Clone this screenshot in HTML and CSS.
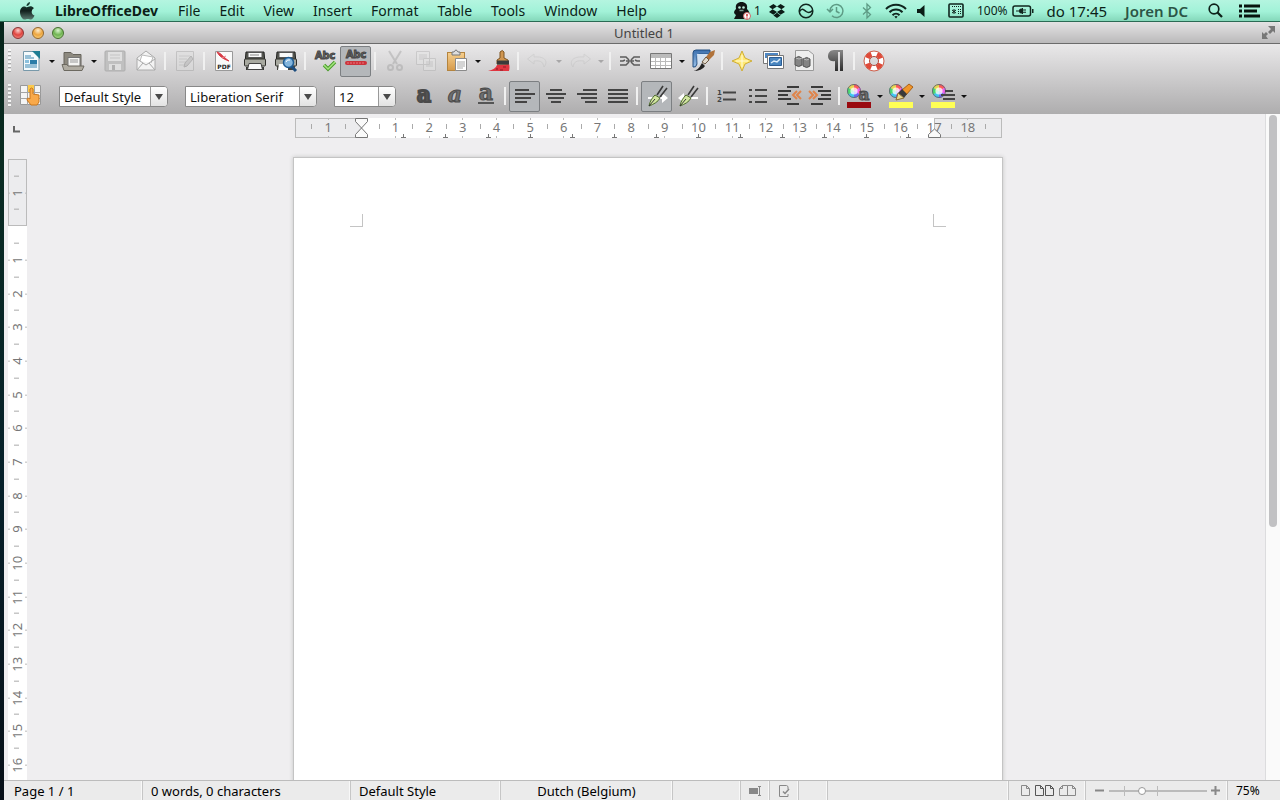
FILE: index.html
```
<!DOCTYPE html>
<html lang="en">
<head>
<meta charset="utf-8">
<title>Untitled 1</title>
<link rel="stylesheet" href="styles.css">
</head>
<body>
<svg class="defs" aria-hidden="true">
  <defs>
    <linearGradient id="ink" x1="0" y1="0" x2="0" y2="1"><stop offset="0" stop-color="#888"/><stop offset="1" stop-color="#2c2c2c"/></linearGradient>
    <linearGradient id="gold" x1="0" y1="0" x2="0" y2="1"><stop offset="0" stop-color="#f6cf8e"/><stop offset="1" stop-color="#d69a4a"/></linearGradient>
    <linearGradient id="blue" x1="0" y1="0" x2="0" y2="1"><stop offset="0" stop-color="#3a6fae"/><stop offset="1" stop-color="#9cc3ea"/></linearGradient>
    <symbol id="wheel" viewBox="0 0 14 14">
      <path fill="#ff5a5a" d="M7 7 7 0A7 7 0 0 1 13 3.500z"/><path fill="#f060f0" d="M7 7 13 3.500A7 7 0 0 1 13 10.500z"/>
      <path fill="#6a6af8" d="M7 7 13 10.500A7 7 0 0 1 7 14z"/><path fill="#40c8f0" d="M7 7 7 14A7 7 0 0 1 1 10.500z"/>
      <path fill="#48dc70" d="M7 7 1 10.500A7 7 0 0 1 1 3.500z"/><path fill="#e8d850" d="M7 7 1 3.500A7 7 0 0 1 7 0z"/>
      <circle cx="7" cy="7" r="3.600" fill="#fff" opacity=".75"/><circle cx="7" cy="7" r="6.500" fill="none" stroke="#667"/>
    </symbol>
    <symbol id="nib" viewBox="0 0 24 24">
      <path d="M12 11 18 2M15 13 22 4" stroke="#3a3a3a" stroke-width="1.600" fill="none"/>
      <path d="M4 22C5 17 7 14 10 11L15 14C13 18 9 20 4 22z" fill="#d2e6a0" stroke="#4c6a2c"/>
      <path d="M4 22 10 15" stroke="#333" fill="none"/>
    </symbol>
  </defs>
</svg>

<header class="menubar">
  <nav class="menus" aria-label="Application menu">
    <button class="apple" aria-label="Apple"><svg width="16" height="18" viewBox="0 0 16 18"><defs><linearGradient id="ap" x1="0" y1="0" x2="0" y2="1"><stop offset="0" stop-color="#1b4a3c"/><stop offset=".5" stop-color="#12201c"/><stop offset="1" stop-color="#5a7a70"/></linearGradient></defs><path fill="url(#ap)" d="M11 0c.2 2-1.500 4-3.500 4C7.300 2.200 9 .4 11 0zM7.900 5.300C8.700 5.300 9.700 4.300 11.400 4.300c1 0 2.600.5 3.500 1.900-3.300 2-2.700 6.200.6 7.400-.8 2.200-2.200 4-3.600 4-1.200 0-1.700-.7-3.100-.7s-2 .7-3.100.7C3.500 17.600 1 13.800 1 10.200 1 6.500 3.300 4.500 5.300 4.500c1.300 0 2 .8 2.600.8z"/></svg></button>
    <button class="app">LibreOfficeDev</button><button>File</button><button>Edit</button><button>View</button><button>Insert</button><button>Format</button><button>Table</button><button>Tools</button><button>Window</button><button>Help</button>
  </nav>
  <div class="tray">
    <span class="count"><svg width="19" height="19" viewBox="0 0 19 19"><path fill="#101514" d="M3 8C2 3 5 1 8.500 1S15 3 14 8c2 2 3 4 2 6l1 4H1l2-4C0 12 1 10 3 8z"/><circle cx="6.500" cy="6.500" r="1.300" fill="#b9e9d6"/><circle cx="10.500" cy="6.500" r="1.300" fill="#b9e9d6"/><path d="M6.500 9.500h4" stroke="#7a9a8e" stroke-width="1.500"/><circle cx="14" cy="15" r="3.500" fill="#fff" stroke="#c66"/><path d="M14 13v2.500M14 16.500v1" stroke="#c22" stroke-width="1.400"/></svg>1</span>
    <svg width="16" height="16" viewBox="0 0 18 18" fill="#0c1c17"><path d="M5 1 0 4.200 4 7 9 4zM13 1 18 4.200 14 7 9 4zM0 10 5 13.200 9 10 4 7zM18 10 13 13.200 9 10 14 7zM9 11 13 14 9 17 5 14z"/></svg>
    <svg width="16" height="16" viewBox="0 0 16 16" fill="none" stroke="#11271f" stroke-width="1.500"><circle cx="8" cy="8" r="6.800"/><path d="M1.500 8.500C4 4.500 6 7 8 8.500S12 10 14.500 7.500"/></svg>
    <svg class="history" width="18" height="16" viewBox="0 0 18 16" fill="none" stroke="#5e9b85" stroke-width="1.500"><path d="M3 8a6.500 6.500 0 1 1 2 4.700M0 6l3 3 3-3M9.500 4v4.500l3 1.500"/></svg>
    <svg width="10" height="16" viewBox="0 0 10 16" fill="none" stroke="#5e9b85" stroke-width="1.300"><path d="M1 4.500 8.500 11.500 5 15V1L8.500 4.500 1 11.500"/></svg>
    <svg width="22" height="16" viewBox="0 0 22 16" fill="none" stroke="#10251e" stroke-width="2"><path d="M1 6a14 14 0 0 1 20 0M4.500 9.200a9 9 0 0 1 13 0M7.500 12.200a5 5 0 0 1 7 0"/><path d="M9.300 13.500 11 15.500 12.700 13.500Q11 12.300 9.300 13.500z" fill="#10251e" stroke="none"/></svg>
    <svg class="speaker" width="8" height="12" viewBox="0 0 8 12" fill="#0b1c16"><path d="M0 4h3L7.500 0v12L3 8H0z"/></svg>
    <svg width="16" height="15" viewBox="0 0 16 15" fill="none" stroke="#10251e"><rect x="1" y="1" width="14" height="13" rx="1" stroke-width="1.600"/><path d="M6 6v5M4 7l4 3M8 7l-4 3"/><path stroke-dasharray="1 1" d="M4 3.500h9M10 6.500h3M10 8.500h3M10 10.500h3"/></svg>
    <span class="power">100%<svg width="22" height="12" viewBox="0 0 22 12"><rect x="1" y="1" width="17.500" height="10" rx="2" fill="none" stroke="#12271f" stroke-width="1.500"/><path fill="#12271f" d="M20 4h1.500v4H20zM4 5.500h3C7 4 8.500 3.500 10 3.500V3h1v1.500h3v1h-3v1.200h3v1h-3V9h-1V8.500C8.500 8.500 7 8 7 6.500H4z"/></svg></span>
    <span class="clock">do 17:45</span>
    <strong class="user">Joren DC</strong>
    <svg class="search" width="15" height="15" viewBox="0 0 15 15" fill="none" stroke="#0e2119"><circle cx="6" cy="6" r="4.800" stroke-width="1.700"/><path d="M9.500 9.500 14 14" stroke-width="2.300"/></svg>
    <svg width="21" height="14" viewBox="0 0 21 14" fill="none" stroke="#07140f" stroke-width="3"><path d="M0 2h3M5 2h16M0 7h3M5 7h13M0 12h3M5 12h16"/></svg>
  </div>
</header>

<main class="window">
  <div class="titlebar">
    <div class="lights"><button class="light red" aria-label="Close"></button><button class="light amber" aria-label="Minimise"></button><button class="light green" aria-label="Zoom"></button></div>
    <h1>Untitled 1</h1>
    <button class="full" aria-label="Full screen"><svg width="15" height="15" viewBox="0 0 15 15" fill="#777"><path d="M7 1h7v7l-2-2-3 3-2-2 3-3zM1 7l2 2 2-2 2 2-2 2 2 3H1z"/></svg></button>
  </div>

  <div class="toolbars">
    <div class="toolbar" role="toolbar" aria-label="Standard">
      <i class="grip"></i>
      <button class="tool" aria-label="New"><svg viewBox="0 0 24 24"><path d="M4.500 2.500H16l4 4V21.500H4.500z" fill="#f4fafc" stroke="#7899aa"/><path d="M13 2h8v8z" fill="#1d7d93"/><path d="M6 7h6M6 9h9M6 16h12M6 18h12" stroke="#3b87b2"/><path d="M6 11h4v3H6z" fill="#8bc0dd"/><path d="M11 11h7v4h-7z" fill="#2c7da8"/></svg></button>
      <button class="drop" aria-label="New options"></button>
      <button class="tool" aria-label="Open"><svg viewBox="0 0 24 24"><path d="M3 17V3.500h7l2 2h8V17" fill="#8d897f" stroke="#66635b"/><path d="M7 8.500h12V18H7z" fill="#f4f4f2" stroke="#777"/><path d="M9 11h8M9 13h8" stroke="#999"/><path d="M1 15.500h5l1 1.500h16l-2 4.500H3z" fill="#b0aca2" stroke="#6c6960"/></svg></button>
      <button class="drop" aria-label="Open options"></button>
      <button class="tool" aria-label="Save" disabled><svg viewBox="0 0 24 24"><rect x="2" y="2" width="20" height="20" rx="1" fill="#c0c0c0" stroke="#adadad"/><path d="M5 3h14v9H5z" fill="#e0e0e0"/><path d="M7 6h10M7 9h10" stroke="#c4c4c4"/><path d="M6 15h12v6H6z" fill="#dedede"/><path d="M9 16h3v5H9z" fill="#b0b0b0"/></svg></button>
      <button class="tool" aria-label="E-mail"><svg viewBox="0 0 24 24"><path d="M3 9 12 2l9 7v12H3z" fill="#f3f3f3" stroke="#aaa"/><path d="M6 12 8 6l11 2-2 6" fill="#fff" stroke="#bbb"/><path d="M3 10 12 16 21 10M3 21 9 14M21 21 15 14" stroke="#aaa" fill="none"/></svg></button>
      <i class="sep"></i>
      <button class="tool faint" aria-label="Edit file" disabled><svg viewBox="0 0 24 24"><path d="M3.500 2.500h17v19h-17z" fill="#ddd" stroke="#999"/><path d="M6 7h11M6 10h8M6 13h7M6 16h6" stroke="#aaa"/><path d="M11 18l1-4 6-7 2 3-6 7z" fill="#aaa" stroke="#777"/></svg></button>
      <i class="sep"></i>
      <button class="tool" aria-label="Export as PDF"><svg viewBox="0 0 24 24"><path d="M3.500 2.500h17v19h-17z" fill="#fafafa" stroke="#999"/><path d="M5 3C9 4 11 8 17 12C11 10 7 7 5 3z" fill="#d83a45" stroke="#d83a45"/><path d="M10 9 14 7" stroke="#e88a90"/><text x="12" y="20" text-anchor="middle" class="pdf">PDF</text></svg></button>
      <button class="tool" aria-label="Print"><svg viewBox="0 0 24 24"><path d="M3 3h18l1 11H2z" fill="#55564f" stroke="#222"/><path d="M5 3.500h14v5H5z" fill="#fafafa" stroke="#555"/><path d="M7 6h9" stroke="#888"/><rect x="1.500" y="10" width="21" height="7" rx="1" fill="#a8a9a0" stroke="#30302c"/><path d="M3 18h5v-4h10v4h3v3H3z" fill="#383935"/><path d="M6 14.500h12l1.500 6h-15z" fill="#fafafa" stroke="#444"/></svg></button>
      <button class="tool" aria-label="Print preview"><svg viewBox="0 0 24 24"><path d="M3 3h18l1 11H2z" fill="#55564f" stroke="#222"/><path d="M5 3.500h14v5H5z" fill="#fafafa" stroke="#555"/><rect x="1.500" y="10" width="21" height="7" rx="1" fill="#a8a9a0" stroke="#30302c"/><path d="M3 17h18v4H3z" fill="#43433f"/><path d="M5 15h9v6H4z" fill="#fff"/><path d="M17 17l5 5" stroke="#1d4d7e" stroke-width="3"/><circle cx="14.500" cy="13.500" r="5" fill="#82b4dc" stroke="#1e5c94" stroke-width="1.500"/><path d="M12 13q1-3 4-2" stroke="#fff" fill="none"/></svg></button>
      <i class="sep"></i>
      <button class="tool" aria-label="Spelling"><svg viewBox="0 0 24 24"><text x="12" y="10" text-anchor="middle" class="abc">Abc</text><path d="M11 16l4 4 7-7" fill="none" stroke="#4a9c2a" stroke-width="3.500"/><path d="M11 16l4 4 7-7" fill="none" stroke="#a5e580" stroke-width="1.500"/></svg></button>
      <button class="tool on" aria-label="AutoSpellcheck" aria-pressed="true"><svg viewBox="0 0 24 24"><text x="12" y="9" text-anchor="middle" class="abc">Abc</text><path d="M3 14h18" fill="none" stroke="#cc333b" stroke-width="4" stroke-linecap="round"/><path d="M3 14h18" stroke="#e8777c" stroke-dasharray="2 1"/></svg></button>
      <i class="sep"></i>
      <button class="tool faint" aria-label="Cut" disabled><svg viewBox="0 0 24 24" fill="none" stroke="#999" stroke-width="2"><path d="M6 2l8 13M18 2 10 15"/><circle cx="7.500" cy="18.500" r="2.500"/><circle cx="16.500" cy="18.500" r="2.500"/></svg></button>
      <button class="tool faint" aria-label="Copy" disabled><svg viewBox="0 0 24 24" fill="#e8e8e8" stroke="#aaa"><path d="M2.500 2.500h13v13h-13zM9.500 9.500h12v12h-12z"/><path d="M5 6h8M5 8h8M5 10h4M12 13h7M12 15h7M12 17h7"/></svg></button>
      <button class="tool" aria-label="Paste"><svg viewBox="0 0 24 24"><rect x="2.500" y="3.500" width="17" height="18" fill="url(#gold)" stroke="#b4843e"/><path d="M7 5V3h2q2-4 4 0h2v3H7z" fill="#ddd" stroke="#777"/><path d="M10.500 9.500h11v12h-11z" fill="#fff" stroke="#8a8a8a"/><path d="M12 13h8M12 15h8M12 17h8M12 19h6" stroke="#aaa"/></svg></button>
      <button class="drop" aria-label="Paste options"></button>
      <button class="tool" aria-label="Clone formatting"><svg viewBox="0 0 24 24"><path d="M1 22C6 21 9 19 10 16l12-1q1 3 0 7z" fill="#e03540"/><path d="M9 20h2M13 21h3M16 18h3" stroke="#8b1a24"/><path d="M10 11 13 9V3q2.500-3 4 0V9L21 11v4H10z" fill="#cf9550" stroke="#7d5522"/><path d="M10 11.500h12v4H10z" fill="#3a3a3a"/></svg></button>
      <i class="sep"></i>
      <button class="tool pale" aria-label="Undo" disabled><svg viewBox="0 0 24 24"><path d="M8 5 1.500 10 8 15V12c8-1 9 2 10 6 4-5 2-11-10-10z" fill="#ddd" stroke="#aaa"/></svg></button>
      <button class="drop pale" aria-label="Undo history" disabled></button>
      <button class="tool pale" aria-label="Redo" disabled><svg viewBox="0 0 24 24"><path d="M16 5l6.500 5-6.500 5V12c-8-1-10 1-11 6-4-5-1-11 11-10z" fill="#ddd" stroke="#aaa"/></svg></button>
      <button class="drop pale" aria-label="Redo history" disabled></button>
      <i class="sep"></i>
      <button class="tool" aria-label="Hyperlink"><svg viewBox="0 0 24 24" fill="none" stroke="#5c5c5c" stroke-width="1.500"><path d="M2 8h6l3 3M2 16h6l3-3M22 8h-6l-3 3M22 16h-6l-3-3M8 12h8M2 12h3l2-1M22 12h-3l-2-1"/></svg></button>
      <button class="tool" aria-label="Table"><svg viewBox="0 0 24 24"><path d="M1.500 4.500h21v15h-21z" fill="#fff" stroke="#777"/><path d="M2 5h20v3H2z" fill="#bbb"/><path d="M2 8.500h20M2 12.500h20M2 16.500h20M6.500 8v11M11.500 8v11M16.500 8v11" stroke="#bbb"/></svg></button>
      <button class="drop" aria-label="Table options"></button>
      <button class="tool" aria-label="Show draw functions"><svg viewBox="0 0 24 24"><path d="M2 4q0-3 3-3h14v4H8q-2 0-2 3v7q-1 4-4 3z" fill="url(#blue)" stroke="#234e80"/><path d="M6 5h11L7 17z" fill="#d3e2f2"/><path d="M2 22q5 0 9-8l3 3q-3 5-12 5z" fill="#222"/><path d="M24 1 19 3l-4 5 3 3 5-5z" fill="#b0723a"/><path d="M15 8l3 3-4 4-3-2z" fill="#e0d9cc" stroke="#6d5a44"/></svg></button>
      <i class="sep"></i>
      <button class="tool" aria-label="Navigator"><svg viewBox="0 0 24 24"><path d="M12 2l3 7 7 3-7 3-3 7-3-7-7-3 7-3z" fill="#ffe873" stroke="#cfae38"/><path d="M12 6v12M6 12h12" stroke="#fffbe0"/></svg></button>
      <button class="tool" aria-label="Gallery"><svg viewBox="0 0 24 24"><path d="M2.500 2.500h16v12h-16z" fill="#fff" stroke="#777"/><path d="M4 4h13v5H4z" fill="#4e86c2"/><path d="M6.500 6.500h16v13h-16z" fill="#fff" stroke="#777"/><path d="M8.500 8.500h12v8h-12z" fill="#4a86c0" stroke="#2a5c94"/><path d="M10 14l3-2 3 1 3-3" stroke="#e0edf8" stroke-width="1.500" fill="none"/></svg></button>
      <button class="tool" aria-label="Data sources"><svg viewBox="0 0 24 24"><path d="M3.500 1.500h13l5 4v16h-18z" fill="#eee" stroke="#999"/><path d="M3 9q4-3 7 0v7q-3 3-7 0zM11 10q4-3 7 0v7q-3 3-7 0z" fill="#848484" stroke="#555"/><path d="M4 9q3 2 6 0M12 10q3 2 5 0" stroke="#bbb" fill="none"/></svg></button>
      <button class="tool" aria-label="Nonprinting characters"><svg viewBox="0 0 24 24"><path d="M11 1h9v21h-3V3h-2v19h-3V12C7 13 5 10 5 7s2-6 6-6z" fill="url(#ink)"/></svg></button>
      <i class="sep"></i>
      <button class="tool" aria-label="Help"><svg viewBox="0 0 24 24" fill="none"><circle cx="12" cy="12" r="7.300" stroke="#fff" stroke-width="5"/><circle cx="12" cy="12" r="7.300" stroke="#e04a3a" stroke-width="5" stroke-dasharray="5.700 5.760" stroke-dashoffset="-2.900"/><circle cx="12" cy="12" r="10" stroke="#d0604c"/><circle cx="12" cy="12" r="4.500" stroke="#b04a3c"/></svg></button>
    </div>

    <div class="toolbar" role="toolbar" aria-label="Formatting">
      <i class="grip"></i>
      <button class="tool" aria-label="Styles and formatting"><svg viewBox="0 0 24 24"><path d="M1.500 1.500h20v19h-20z" fill="#f4f4f4" stroke="#999"/><path d="M8 1h7v7H8z" fill="#fbc94a"/><path d="M1.500 8.500h20M1.500 14.500h20M8.500 1v20M15.500 1v20" stroke="#a4a4a4"/><path d="M11 12V5q1.500-2 3 0v5l6 1v7l-2 3h-6L8 16q0-3 3-1z" fill="#f9a94a" stroke="#c9761c"/></svg></button>
      <label class="combo style"><select aria-label="Paragraph style"><option>Default Style</option></select><i></i></label>
      <label class="combo font"><select aria-label="Font name"><option>Liberation Serif</option></select><i></i></label>
      <label class="combo size"><select aria-label="Font size"><option>12</option></select><i></i></label>
      <button class="tool" aria-label="Bold"><svg viewBox="0 0 24 24"><text x="12" y="18" text-anchor="middle" class="letter heavy">a</text></svg></button>
      <button class="tool" aria-label="Italic"><svg viewBox="0 0 24 24"><text x="12" y="18" text-anchor="middle" class="letter slant">a</text></svg></button>
      <button class="tool" aria-label="Underline"><svg viewBox="0 0 24 24"><text x="12" y="16" text-anchor="middle" class="letter">a</text><path d="M4 19h16" stroke="#555" stroke-width="2"/></svg></button>
      <i class="sep"></i>
      <button class="tool on" aria-label="Align left" aria-pressed="true"><svg viewBox="0 0 24 24" stroke="#444" stroke-width="2"><path d="M2 6h14M2 10h20M2 14h16M2 18h12"/></svg></button>
      <button class="tool" aria-label="Centre"><svg viewBox="0 0 24 24" stroke="#444" stroke-width="2"><path d="M6 6h12M2 10h20M4 14h16M7 18h10"/></svg></button>
      <button class="tool" aria-label="Align right"><svg viewBox="0 0 24 24" stroke="#444" stroke-width="2"><path d="M8 6h14M2 10h20M6 14h16M10 18h12"/></svg></button>
      <button class="tool" aria-label="Justify"><svg viewBox="0 0 24 24" stroke="#444" stroke-width="2"><path d="M2 6h20M2 10h20M2 14h20M2 18h20"/></svg></button>
      <i class="sep"></i>
      <button class="tool on" aria-label="Left to right" aria-pressed="true"><svg viewBox="0 0 24 24"><path d="M3 13h14V9l6 5-6 5v-4H3z" fill="#fff"/><use href="#nib"/></svg></button>
      <button class="tool" aria-label="Right to left"><svg viewBox="0 0 24 24"><path d="M22 13H8V9l-6 5 6 5v-4h14z" fill="#fff"/><use href="#nib"/></svg></button>
      <i class="sep"></i>
      <button class="tool" aria-label="Numbering"><svg viewBox="0 0 24 24"><text x="2" y="11" class="digit">1</text><text x="2" y="18" class="digit">2</text><path d="M8 8.500h13M8 15.500h13" stroke="#444" stroke-width="2"/></svg></button>
      <button class="tool" aria-label="Bullets"><svg viewBox="0 0 24 24" stroke="#444" stroke-width="2"><path d="M3 6h3M3 12h3M3 18h3M9 6h12M9 12h12M9 18h12"/></svg></button>
      <button class="tool" aria-label="Decrease indent"><svg viewBox="0 0 24 24" fill="none" stroke="#3a3a3a" stroke-width="2"><path d="M10 3h12M1 7h13M1 11h10M1 15h13M10 20h12"/><path d="M20 7l-4 4 4 4M24 7l-4 4 4 4" stroke="#e0844a"/></svg></button>
      <button class="tool" aria-label="Increase indent"><svg viewBox="0 0 24 24" fill="none" stroke="#3a3a3a" stroke-width="2"><path d="M3 3h12M10 7h13M13 11h10M10 15h13M3 20h12"/><path d="M1 7l4 4-4 4M5 7l4 4-4 4" stroke="#e0844a"/></svg></button>
      <i class="sep"></i>
      <button class="tool" aria-label="Font colour"><svg viewBox="0 0 24 24"><use href="#wheel" x="0" y="0" width="14" height="14"/><text x="17" y="16" text-anchor="middle" class="letter small">a</text><path d="M0 18h24v6H0z" fill="#9a0a10"/></svg></button>
      <button class="drop" aria-label="Font colour options"></button>
      <button class="tool" aria-label="Highlighting"><svg viewBox="0 0 24 24"><use href="#wheel" x="0" y="0" width="14" height="14"/><path d="M24 3 20 0l-7 6 4 5z" fill="#f0952a" stroke="#a86018"/><path d="M13 5l5 5-3 4-6-5z" fill="#3a3a3a"/><path d="M7 16l2-7 6 5z" fill="#e8d890" stroke="#8a6a30"/><path d="M0 18h24v6H0z" fill="#ffff55"/></svg></button>
      <button class="drop" aria-label="Highlighting options"></button>
      <button class="tool" aria-label="Background colour"><svg viewBox="0 0 24 24"><use href="#wheel" x="1" y="0" width="14" height="14"/><path d="M14 7h8M10 11h14M12 15h12" stroke="#444" stroke-width="2"/><path d="M0 18h24v6H0z" fill="#ffff55"/></svg></button>
      <button class="drop" aria-label="Background colour options"></button>
    </div>
  </div>

  <div class="workspace">
    <div class="side">
      <button class="tabstop" aria-label="Tab type"><svg width="8" height="7" viewBox="0 0 8 7"><path d="M1 0v5.500h6" fill="none" stroke="#666" stroke-width="2"/></svg></button>
      <div class="vclip"><div class="vruler" id="vruler"></div></div>
    </div>
    <div class="desk">
      <div class="hruler" id="hruler"></div>
      <article class="page"><i class="corner left"></i><i class="corner right"></i></article>
    </div>
    <div class="scroll"><i></i></div>
  </div>

  <footer class="status">
    <span class="cell pages">Page 1 / 1</span>
    <span class="cell words">0 words, 0 characters</span>
    <span class="cell pstyle">Default Style</span>
    <span class="cell lang">Dutch (Belgium)</span>
    <span class="cell gap"></span>
    <button class="cell mini" aria-label="Insert mode"><svg width="14" height="12" viewBox="0 0 14 12"><path d="M1 3h9v6H1z" fill="#888"/><path d="M10 1.500h3M10 10.500h3M11.500 1v10" stroke="#888"/></svg></button>
    <button class="cell mini" aria-label="Selection mode"><svg width="12" height="12" viewBox="0 0 12 12" fill="none" stroke="#888"><path d="M10 4V1.500L8.500.500H1.500v11H10V9"/><path d="M5 6.500l2 2L11 4" stroke-width="1.500"/></svg></button>
    <span class="cell mini"></span>
    <span class="cell fill"></span>
    <span class="cell views">
      <button aria-label="Single page"><svg width="9" height="11" viewBox="0 0 9 11" fill="none" stroke="#888"><path d="M.5.500h5l3 3v7h-8zM5.500.500v3h3"/></svg></button>
      <button aria-label="Multiple pages"><svg width="19" height="11" viewBox="0 0 19 11" fill="none" stroke="#555"><path d="M.5.500h5l3 3v7h-8zM5.500.500v3h3M10.500.500h5l3 3v7h-8zM15.500.500v3h3"/></svg></button>
      <button aria-label="Book view"><svg width="17" height="11" viewBox="0 0 17 11" fill="none" stroke="#888"><path d="M8.500.500h5l3 3v7h-16v-7l3-3h5v10M13.500.500v3h3M3.500.500v3h-3"/></svg></button>
    </span>
    <span class="cell zoom">
      <button aria-label="Zoom out"><svg width="9" height="9" viewBox="0 0 9 9"><path d="M0 4.500h9" stroke="#888" stroke-width="2"/></svg></button>
      <input type="range" min="0" max="100" value="33" aria-label="Zoom">
      <button aria-label="Zoom in"><svg width="9" height="9" viewBox="0 0 9 9"><path d="M0 4.500h9M4.500 0v9" stroke="#888" stroke-width="2"/></svg></button>
    </span>
    <span class="cell percent">75%</span>
  </footer>
</main>
<script src="rulers.js"></script>
</body>
</html>
```
FILE: rulers.js
```
// Both rulers are grids counted in quarter centimetres, with a 2 cm page margin.
function place(ruler, axis, className, start, span, text) {
  const el = document.createElement('span');
  el.className = className;
  el.style[axis === 'h' ? 'gridColumn' : 'gridRow'] = (start + 1) + ' / span ' + span;
  if (text) el.textContent = text;
  ruler.append(el);
}

const h = document.getElementById('hruler');
place(h, 'h', 'margin', 0, 8);
place(h, 'h', 'body', 8, 68);
place(h, 'h', 'margin', 76, 8);
for (let cm = -1; cm <= 19; cm++) {
  if (cm === 19) place(h, 'h', 'mark', 82, 2);
  else place(h, 'h', cm ? 'mark num' : 'mark', (cm + 2) * 4 - 2, 4, cm ? String(Math.abs(cm)) : '');
}
for (let i = 1; i <= 13; i++) place(h, 'h', 'tab', 8 + i * 5 - 1, 2);
place(h, 'h', 'indent first', 6, 4);
place(h, 'h', 'indent last', 74, 4);
const shape = (d) => '<svg width="13" height="20" viewBox="0 0 13 20" fill="#fafafa" stroke="#777"><path d="' + d + '"/></svg>';
h.querySelector('.first').innerHTML = shape('M.5.500h12v3L6.500 10 .5 3.500zM.5 19.500h12v-3L6.500 10 .5 16.500z');
h.querySelector('.last').innerHTML = shape('M.5 19.500h12v-3L6.500 11 .5 16.500z');

const v = document.getElementById('vruler');
place(v, 'v', 'margin', 0, 8);
place(v, 'v', 'body', 8, 110);
for (let cm = -1; cm <= 16; cm++) {
  place(v, 'v', cm ? 'mark num' : 'mark', (cm + 2) * 4 - 2, 4, cm ? String(Math.abs(cm)) : '');
}
```
FILE: styles.css
```
* { box-sizing: border-box; }
html, body { height: 100%; margin: 0; }
body {
  display: flex;
  flex-direction: column;
  overflow: hidden;
  font-family: "Noto Sans", "Open Sans", sans-serif;
  font-size: 13px;
  color: #111;
  background: linear-gradient(#06231a, #0a2c22 20%, #06202a 60%, #081018);
}
button, select, input { font: inherit; color: inherit; margin: 0; }
button { display: flex; align-items: center; justify-content: center; padding: 0; border: 0; background: none; }
svg { display: block; flex: none; overflow: visible; }
.defs { position: absolute; width: 0; height: 0; overflow: hidden; }

/* Menu bar */
.menubar {
  display: flex;
  justify-content: space-between;
  flex: none;
  height: 22px;
  padding: 0 20px 0 19px;
  border-bottom: 1px solid #2c6b55;
  background: linear-gradient(#b4f5e0, #a2f2d8 55%, #84d8ba);
  font-size: 14px;
  color: #0c1f18;
}
.menus, .tray { display: flex; align-items: center; }
.menus { gap: 19px; }
.app { width: 105px; font-weight: 700; }
.tray { gap: 13px; }
.count, .power { display: flex; align-items: center; gap: 2px; font-size: 12px; }
.count { margin-right: -5px; }
.power { gap: 4px; }
.history { margin-right: 4px; }
.speaker { margin: 0 10px 0 -3px; }
.clock, .user { font-size: 15px; }
.user { padding: 0 7px 0 5px; font-weight: 600; color: #2c5546; }
.search { margin-right: 3px; }

/* Window frame */
.window { display: flex; flex-direction: column; flex: 1; min-height: 0; margin-left: 4px; background: #efeef0; }
.titlebar {
  display: grid;
  grid-template-columns: 1fr auto 1fr;
  align-items: center;
  flex: none;
  height: 22px;
  padding: 0 4px 0 8px;
  border-bottom: 1px solid #6b6b6b;
  border-radius: 4px 4px 0 0;
  background: linear-gradient(#e4e3e4, #bab9ba);
}
.titlebar h1 { margin: 0; font-size: 13px; font-weight: 400; color: #444; }
.lights { display: flex; gap: 8px; }
.light { width: 12px; height: 12px; border: 1px solid #555; border-radius: 50%; }
.red { border-color: #8a3434; background: radial-gradient(circle at 50% 25%, #fbd0cc, #e0443e 50%, #f49a94); }
.amber { border-color: #94662a; background: radial-gradient(circle at 50% 25%, #fdeccb, #eda53e 50%, #fbdc90); }
.green { border-color: #44702f; background: radial-gradient(circle at 50% 25%, #dcf5cf, #6fb452 50%, #bfe69c); }
.full { justify-self: end; }

/* Toolbars */
.toolbars { flex: none; background: linear-gradient(#e9e8e9, #aeadae); }
.toolbar { display: flex; align-items: center; height: 35px; padding: 0 0 1px 4px; }
.grip { width: 3px; height: 24px; margin-right: 4px; background: repeating-linear-gradient(#f6f6f6 0 2px, #aaa 2px 3px, transparent 3px 4px); }
.tool { flex: none; width: 31px; height: 31px; border: 1px solid transparent; border-radius: 2px; }
.tool svg { width: 24px; height: 24px; }
.tool.on { border-color: #7c7f82; background: #b4b7ba; }
.faint { opacity: .4; }
.pale { opacity: .25; }
.sep { flex: none; width: 2px; height: 18px; margin: 0 3px; border-left: 2px solid #f0f0f0; }
.drop { flex: none; width: 11px; height: 24px; }
.drop::after { content: ""; border: 3px solid transparent; border-top-color: #111; border-bottom: 0; }
.combo { display: flex; position: relative; height: 21px; margin-right: 17px; margin-top: 1px; border: 1px solid #888; border-radius: 0 4px 4px 0; background: #fff; overflow: hidden; }
.combo select { appearance: none; width: 100%; padding: 0 18px 0 4px; border: 0; background: none; font-size: 13px; }
.combo i { position: absolute; top: 0; right: 0; bottom: 0; display: flex; align-items: center; justify-content: center; width: 17px; border-left: 1px solid #999; background: linear-gradient(#fff, #e2e2e2); pointer-events: none; }
.combo i::after { content: ""; border: 4px solid transparent; border-top: 6px solid #4a4a4a; border-bottom: 0; }
.style { width: 109px; margin-left: 13px; }
.font { width: 132px; }
.size { width: 62px; margin-right: 12px; }
.abc { font: 700 11px "Open Sans", sans-serif; fill: #777; stroke: #444; stroke-width: 1px; }
.pdf { font: 700 6px "DejaVu Sans", sans-serif; fill: #222; }
.digit { font: 700 7px "DejaVu Sans", sans-serif; fill: #444; }
.letter { font: 700 22px "DejaVu Serif", serif; fill: #6e6e6e; stroke: #4a4a4a; stroke-width: 1px; }
.heavy { fill: #555; stroke-width: 2px; }
.slant { font-style: italic; }
.small { font-size: 17px; }

/* Document area */
.workspace { display: flex; flex: 1; min-height: 0; }
.side { display: flex; flex-direction: column; flex: none; width: 24px; padding-left: 4px; }
.tabstop { flex: none; width: 18px; height: 30px; }
.vclip { flex: 1; min-height: 0; margin-top: 15px; overflow: hidden; }
.desk { display: flex; flex-direction: column; align-items: center; flex: 1; min-width: 0; padding: 4px 0 0 3px; overflow: hidden; }
.hruler, .vruler { display: grid; font-size: 13px; line-height: 18px; color: #777; }
.hruler { flex: none; width: 707px; height: 20px; grid-template-columns: repeat(84, 1fr); grid-template-rows: 20px; }
.vruler { width: 19px; height: 993px; grid-template-rows: repeat(118, 1fr); grid-template-columns: 19px; }
.hruler > span { grid-row: 1; min-width: 0; }
.vruler > span { grid-column: 1; min-height: 0; }
.margin { border: 1px solid #bbb; background: #ececee; }
.body { background: #fff; }
.mark { display: flex; align-items: center; justify-content: center; }
.hruler .mark { padding-bottom: 2px; background: linear-gradient(#aaa, #aaa) 0 6px / 1px 5px no-repeat; }
.hruler .num { background: linear-gradient(#aaa, #aaa) 0 6px / 1px 5px no-repeat, linear-gradient(#bbb, #bbb) 50% 0 / 1px 2px no-repeat, linear-gradient(#bbb, #bbb) 50% 100% / 1px 2px no-repeat; }
.vruler .mark { padding-left: 2px; writing-mode: vertical-rl; transform: rotate(180deg); background: linear-gradient(#aaa, #aaa) 60% 100% / 5px 1px no-repeat; }
.vruler .num { background: linear-gradient(#aaa, #aaa) 60% 100% / 5px 1px no-repeat, linear-gradient(#bbb, #bbb) 0 50% / 2px 1px no-repeat, linear-gradient(#bbb, #bbb) 100% 50% / 2px 1px no-repeat; }
.tab { align-self: end; justify-self: center; width: 5px; height: 4px; background: linear-gradient(#777, #777) 0 100% / 5px 1px no-repeat, linear-gradient(#777, #777) 50% 0 / 1px 4px no-repeat; }
.indent { display: flex; justify-content: center; }
.page { display: flex; justify-content: space-between; flex: none; width: 710px; height: 1000px; margin-top: 19px; padding: 56px; border: 1px solid #c4c4c4; background: #fff; box-shadow: 0 0 4px #c4c4c4; }
.corner { width: 13px; height: 13px; border-bottom: 1px solid #c4c4c4; }
.corner.left { border-right: 1px solid #c4c4c4; }
.corner.right { border-left: 1px solid #c4c4c4; }
.scroll { flex: none; width: 15px; padding: 1px 3px; border-left: 1px solid #dcdcde; background: #fafafa; }
.scroll i { display: block; height: 62%; border-radius: 4px; background: #c1c1c3; }

/* Status bar */
.status { display: flex; flex: none; height: 20px; border-top: 1px solid #bcbcbc; background: #ebebeb; font-size: 13px; color: #000; }
.cell { display: flex; align-items: center; flex: none; padding-left: 8px; border-right: 1px solid #c6c6c6; box-shadow: inset -1px 0 #f8f8f8; white-space: nowrap; }
.pages { width: 139px; padding-left: 10px; }
.words { width: 208px; }
.pstyle { width: 150px; }
.lang { width: 172px; padding: 0; justify-content: center; }
.gap { width: 68px; }
.mini { width: 29px; padding: 0; justify-content: center; border-right: 1px solid #c6c6c6; }
.fill { flex: 1; }
.views { width: 77px; gap: 5px; padding-left: 12px; }
.zoom { width: 142px; padding: 0 7px 0 9px; justify-content: space-between; }
.zoom input { appearance: none; width: 98px; height: 16px; background: linear-gradient(#bbb, #bbb) 0 50% / 100% 2px no-repeat, linear-gradient(#bbb, #bbb) 15px 50% / 1px 10px no-repeat, linear-gradient(#bbb, #bbb) 48px 50% / 1px 10px no-repeat; }
.zoom input::-webkit-slider-thumb { appearance: none; width: 8px; height: 8px; border: 1px solid #999; border-radius: 50%; background: #fff; }
.percent { width: 52px; padding-left: 8px; border: 0; box-shadow: none; font-size: 12px; }
```
